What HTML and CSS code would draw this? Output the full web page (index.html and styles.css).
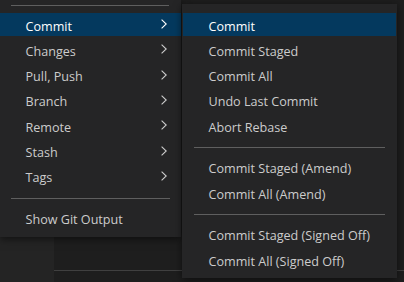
FILE: index.html
```html
<!DOCTYPE html>
<html lang="en">
<head>
<meta charset="utf-8">
<title>Git menu</title>
<link rel="stylesheet" href="styles.css">
</head>
<body>
<div class="workbench">
  <div class="activity"></div>
  <div class="editor">
    <div class="panel"></div>
  </div>

  <div class="menu main-menu">
    <div class="sep sep-top"></div>
    <div class="item active"><span>Commit</span><svg class="chev" viewBox="0 0 6 10"><polyline points="0.6,0.6 5.2,5 0.6,9.4"/></svg></div>
    <div class="item"><span>Changes</span><svg class="chev" viewBox="0 0 6 10"><polyline points="0.6,0.6 5.2,5 0.6,9.4"/></svg></div>
    <div class="item"><span>Pull, Push</span><svg class="chev" viewBox="0 0 6 10"><polyline points="0.6,0.6 5.2,5 0.6,9.4"/></svg></div>
    <div class="item"><span>Branch</span><svg class="chev" viewBox="0 0 6 10"><polyline points="0.6,0.6 5.2,5 0.6,9.4"/></svg></div>
    <div class="item"><span>Remote</span><svg class="chev" viewBox="0 0 6 10"><polyline points="0.6,0.6 5.2,5 0.6,9.4"/></svg></div>
    <div class="item"><span>Stash</span><svg class="chev" viewBox="0 0 6 10"><polyline points="0.6,0.6 5.2,5 0.6,9.4"/></svg></div>
    <div class="item"><span>Tags</span><svg class="chev" viewBox="0 0 6 10"><polyline points="0.6,0.6 5.2,5 0.6,9.4"/></svg></div>
    <div class="sep"></div>
    <div class="item"><span>Show Git Output</span></div>
  </div>

  <div class="menu sub-menu">
    <div class="item active"><span>Commit</span></div>
    <div class="item"><span>Commit Staged</span></div>
    <div class="item"><span>Commit All</span></div>
    <div class="item"><span>Undo Last Commit</span></div>
    <div class="item"><span>Abort Rebase</span></div>
    <div class="sep"></div>
    <div class="item"><span>Commit Staged (Amend)</span></div>
    <div class="item"><span>Commit All (Amend)</span></div>
    <div class="sep"></div>
    <div class="item"><span>Commit Staged (Signed Off)</span></div>
    <div class="item"><span>Commit All (Signed Off)</span></div>
  </div>
</div>
</body>
</html>
```

FILE: styles.css
```css
html, body {
  margin: 0;
  padding: 0;
  background: #1e1e1e;
}

.workbench {
  position: relative;
  width: 404px;
  height: 282px;
  overflow: hidden;
  display: flex;
  font-family: "Open Sans", "Noto Sans", sans-serif;
  font-size: 12.6px;
}

.activity {
  width: 54px;
  background: #242424;
}

.editor {
  flex: 1;
  display: flex;
  flex-direction: column;
  justify-content: flex-end;
  background: #1e1e1e;
}

.panel {
  height: 11px;
  border-top: 1px solid #404040;
  background: #1e1e1e;
}

.menu {
  position: absolute;
  display: flex;
  flex-direction: column;
  background: #252526;
  color: #cccccc;
  box-shadow: 0 2px 8px rgba(0, 0, 0, 0.55);
  box-sizing: border-box;
}

.main-menu {
  left: 0;
  top: 0;
  width: 181px;
  padding-bottom: 6px;
}

.sub-menu {
  left: 182px;
  top: 4px;
  width: 215px;
  height: 274px;
  padding: 8px 1px 0 1px;
}

.item {
  height: 22.7px;
  margin: 1.3px 0;
  padding: 0 14px 0 25.5px;
  display: flex;
  align-items: center;
  justify-content: space-between;
  white-space: nowrap;
  flex-shrink: 0;
}

.item span {
  margin-top: 3px;
}

.sub-menu .item {
  padding-left: 25.5px;
}

.item.active {
  background: #04395e;
  color: #ffffff;
}

.chev {
  width: 6px;
  height: 10px;
  fill: none;
  stroke: currentColor;
  stroke-width: 1.1;
  margin-top: -1px;
}

.sep {
  height: 1px;
  background: #5f5f5f;
  margin: 8.8px 11px 6.6px 11px;
  flex-shrink: 0;
}

.sep-top {
  margin: 5px 12px 6px 11px;
}
```
